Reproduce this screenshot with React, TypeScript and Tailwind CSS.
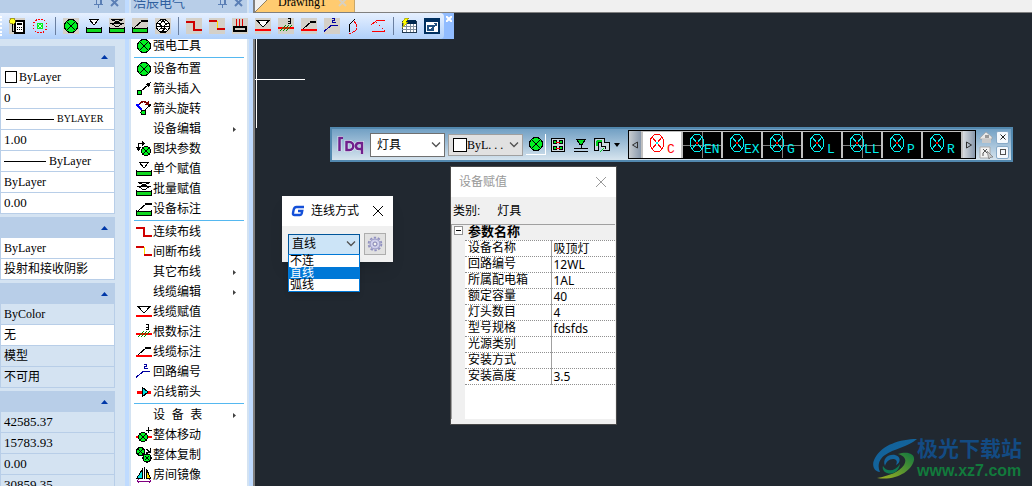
import type { ReactNode } from "react";

function Icon({ children, className = "" }: { children: ReactNode; className?: string }) {
  return (
    <svg viewBox="0 0 16 16" fill="none" shapeRendering="crispEdges" className={`h-4 w-4 shrink-0 ${className}`} aria-hidden="true">
      {children}
    </svg>
  );
}

// Lamp symbol, reused inside several icons
function LampShape({ x = 8, y = 8, r = 6 }: { x?: number; y?: number; r?: number }) {
  const d = r * 0.6;
  return (
    <>
      <circle cx={x} cy={y} r={r} fill="#00f020" stroke="#000" strokeWidth="1.3" />
      <path d={`M${x - d} ${y - d}L${x + d} ${y + d}M${x + d} ${y - d}L${x - d} ${y + d}`} stroke="#000" />
    </>
  );
}

// Green luminaire body under the triangle and leader icons
const greenBase = (
  <>
    <path d="M1 11h14v3H1z" fill="#10d820" />
    <path d="M.5 9v6M15.5 9v6M0 10.5h16M0 14.5h16" stroke="#000" />
  </>
);

const icons = {
  lamp: <LampShape r={6.5} />,
  arrowInsert: (
    <>
      <path d="M4 11L12 4" stroke="#000" />
      <path d="M15 1L9 3l4 4z" fill="#000" />
      <rect x="1.5" y="9.5" width="4" height="4" fill="#00f020" stroke="#000" />
    </>
  ),
  arrowRotate: (
    <>
      <path d="M4 3C5 0 9 0 11 2" stroke="#800000" strokeWidth="1.5" />
      <path d="M8 4h5V0z" fill="#800000" />
      <path d="M6 9L2 5" stroke="#00f" strokeWidth="1.5" />
      <path d="M0 3h4L1 7z" fill="#00f" />
      <path d="M9 9l4-4" stroke="#000" />
      <path d="M15 3l-4 1 3 3z" fill="#000" />
      <circle cx="7.5" cy="11.5" r="2.5" fill="#00f020" stroke="#000" />
    </>
  ),
  blockParam: (
    <>
      <path d="M2.5 9V2.5H7M1 8h3" stroke="#000" />
      <path d="M6 0l3 2.5L6 5zM0 6h5L2.5 10z" fill="#000" />
      <LampShape x={10} y={10} r={4.5} />
    </>
  ),
  single: (
    <>
      <path d="M3.5 1.5h9L8 7z" stroke="#000" fill="#fff" />
      {greenBase}
    </>
  ),
  batch: (
    <>
      <path d="M2 1.5h12L3 6M13 6L2 1.5M1 5.5h14M3 6l5 3 5-3" stroke="#000" />
      {greenBase}
    </>
  ),
  deviceMark: (
    <>
      {greenBase}
      <path d="M2 10l8-7" stroke="#000" />
      <path d="M9 2.5h7" stroke="#000" strokeWidth="2" />
    </>
  ),
  wire: <path d="M0 4h8v8h8" stroke="#d00000" strokeWidth="2" />,
  brokenWire: (
    <>
      <path d="M8.5 3v8" stroke="#ffe000" />
      <path d="M0 3h8M8 11h8" stroke="#d00000" strokeWidth="2" />
    </>
  ),
  cableAssign: (
    <>
      <path d="M2 2.5h12L8 9z" stroke="#000" fill="#fff" />
      <path d="M0 12h16" stroke="#f00" strokeWidth="2" />
    </>
  ),
  rootCount: (
    <>
      <path d="M0 10h16" stroke="#f00" strokeWidth="2" />
      <path d="M2 13l6-6M5 13l6-6M8 13l6-6" stroke="#009000" />
      <path d="M10 .5h2.5v5H10M10 3h3" stroke="#000" />
    </>
  ),
  cableMark: (
    <>
      <path d="M0 12h16" stroke="#f00" strokeWidth="2" />
      <path d="M2 11l8-7" stroke="#000" />
      <path d="M9 4h6" stroke="#000" strokeWidth="2" />
    </>
  ),
  circuitNo: (
    <>
      <path d="M0 13.5l7-6h7" stroke="#0000a0" strokeWidth="1.2" />
      <path d="M8 .5h2.5v2H8.5v2H12" stroke="#0000a0" />
    </>
  ),
  alongArrow: (
    <>
      <path d="M1 8h14" stroke="#f00" strokeWidth="3" />
      <path d="M6 3l6 5-6 5z" fill="#00e0e0" stroke="#000" />
    </>
  ),
  moveAll: (
    <>
      <path d="M0 10h16" stroke="#f00" strokeWidth="2" />
      <LampShape x={7} y={10} r={4.5} />
      <path d="M12.5 0v6M9.5 3h6" stroke="#000" />
    </>
  ),
  copyAll: (
    <>
      <LampShape x={4.5} y={4.5} r={4} />
      <LampShape x={11} y={11} r={4} />
      <path d="M10 2l4 3M14 1v4h-4" stroke="#000" />
    </>
  ),
  mirror: (
    <>
      <path d="M6.5 2v9H1z" fill="#00e0e0" stroke="#000" />
      <path d="M10.5 2v9h4z" fill="#ffe000" stroke="#000" />
      <path d="M8.5 0v12" stroke="#000" />
      <path d="M1 14h14M3 12l-2 2 2 2M13 12l2 2-2 2" stroke="#800080" />
    </>
  ),
  calculator: (
    <>
      <path d="M6 3h9v12H6z" fill="#fff" stroke="#000" strokeWidth="2" />
      <path d="M8 6h5" stroke="#000" strokeWidth="2" />
      <path d="M8 9.5h5M8 11.5h5" stroke="#000" strokeDasharray="1 1" />
      <circle cx="3.5" cy="3" r="3" fill="#ffff20" stroke="#706000" strokeWidth=".6" />
      <path d="M3.5 6v7H6" stroke="#000" />
    </>
  ),
  target: (
    <>
      <circle cx="8" cy="8" r="7" stroke="#f00" strokeDasharray="1.5 1.6" />
      <circle cx="8" cy="8" r="3.5" fill="#00f020" />
      <path d="M6 6l4 4M10 6l-4 4" stroke="#fff" strokeWidth=".8" />
    </>
  ),
  phases: (
    <>
      <circle cx="8" cy="8" r="6.5" stroke="#000" fill="#fff" />
      <path d="M5.5 6L8 2l2.5 4M1 8h14M3 5l4 3M13 5L9 8M4 12l4-4M12 12L8 8M6 10.5h4l-3 3h3" stroke="#000" />
    </>
  ),
  ground: (
    <>
      <path d="M4.5 1v7M7.5 1v7M10.5 1v7" stroke="#e00000" />
      <path d="M2 9h12v4H2z" fill="#d4d0c8" stroke="#000" strokeWidth="1.3" />
    </>
  ),
  polygon: (
    <>
      <path d="M2 14V7l6-6" stroke="#000" />
      <path d="M7 3l3 4-1 5-4 3H2" stroke="#f00" strokeDasharray="3 1" />
    </>
  ),
  angle: (
    <>
      <path d="M15 2.5H7L1 7M2 13.5h13" stroke="#f00" />
      <path d="M6 4l9 9" stroke="#f00" strokeDasharray="2 2" />
    </>
  ),
  grid: (
    <>
      <path d="M1 3h14v11H1z" fill="#fff" stroke="#203850" />
      <path d="M5 2h10v4H5z" fill="#002850" />
      <path d="M1 8.5h14M1 11.5h14M5.5 6v8M9.5 6v8M12.5 6v8" stroke="#8090a0" />
      <path d="M4 0h4L5 4h2l-6 6 2-5H1z" fill="#ffff00" stroke="#605800" strokeWidth=".4" />
    </>
  ),
  popout: (
    <>
      <path d="M1 1h14v14H1z" fill="#fff" stroke="#003060" strokeWidth="2" />
      <path d="M1 1h14v3H1z" fill="#003060" />
      <path d="M4 8h5v4H4zM7 11l5-4" stroke="#205080" strokeWidth="1.5" />
      <path d="M9 5h4v4z" fill="#205080" />
    </>
  ),
};

type IconName = keyof typeof icons;

const toolbar: { icon: IconName | null; name: string; flat?: boolean }[] = [
  { icon: "calculator", name: "计算" },
  { icon: "target", name: "定位", flat: true },
  { icon: null, name: "s1" },
  { icon: "lamp", name: "设备布置" },
  { icon: "single", name: "单个赋值", flat: true },
  { icon: "batch", name: "批量赋值" },
  { icon: "deviceMark", name: "设备标注" },
  { icon: "phases", name: "相序" },
  { icon: null, name: "s2" },
  { icon: "wire", name: "连续布线" },
  { icon: "brokenWire", name: "间断布线" },
  { icon: "ground", name: "接地" },
  { icon: "cableAssign", name: "线缆赋值" },
  { icon: "rootCount", name: "根数标注" },
  { icon: "cableMark", name: "线缆标注" },
  { icon: "circuitNo", name: "回路编号" },
  { icon: "polygon", name: "多边形", flat: true },
  { icon: "angle", name: "角度", flat: true },
  { icon: null, name: "s3" },
  { icon: "grid", name: "表格", flat: true },
  { icon: "popout", name: "窗口", flat: true },
];

type MenuItem = { label: string; icon?: IconName; sub?: boolean };

const menuGroups: MenuItem[][] = [
  [{ label: "强电工具", icon: "lamp" }],
  [
    { label: "设备布置", icon: "lamp" },
    { label: "箭头插入", icon: "arrowInsert" },
    { label: "箭头旋转", icon: "arrowRotate" },
    { label: "设备编辑", sub: true },
    { label: "图块参数", icon: "blockParam" },
    { label: "单个赋值", icon: "single" },
    { label: "批量赋值", icon: "batch" },
    { label: "设备标注", icon: "deviceMark" },
  ],
  [
    { label: "连续布线", icon: "wire" },
    { label: "间断布线", icon: "brokenWire" },
    { label: "其它布线", sub: true },
    { label: "线缆编辑", sub: true },
    { label: "线缆赋值", icon: "cableAssign" },
    { label: "根数标注", icon: "rootCount" },
    { label: "线缆标注", icon: "cableMark" },
    { label: "回路编号", icon: "circuitNo" },
    { label: "沿线箭头", icon: "alongArrow" },
  ],
  [
    { label: "设  备  表", sub: true },
    { label: "整体移动", icon: "moveAll" },
    { label: "整体复制", icon: "copyAll" },
    { label: "房间镜像", icon: "mirror" },
  ],
];

type Prop = { value: string; kind?: "swatch" | "long" | "short"; locked?: boolean };

const sections: Prop[][] = [
  [
    { value: "ByLayer", kind: "swatch" },
    { value: "0" },
    { value: "BYLAYER", kind: "long" },
    { value: "1.00" },
    { value: "ByLayer", kind: "short" },
    { value: "ByLayer" },
    { value: "0.00" },
  ],
  [{ value: "ByLayer" }, { value: "投射和接收阴影" }],
  [
    { value: "ByColor", locked: true },
    { value: "无" },
    { value: "模型", locked: true },
    { value: "不可用", locked: true },
  ],
  [
    { value: "42585.37", locked: true },
    { value: "15783.93", locked: true },
    { value: "0.00", locked: true },
    { value: "30859.35", locked: true },
  ],
];

const params = [
  ["设备名称", "吸顶灯"],
  ["回路编号", "12WL"],
  ["所属配电箱", "1AL"],
  ["额定容量", "40"],
  ["灯头数目", "4"],
  ["型号规格", "fdsfds"],
  ["光源类别", ""],
  ["安装方式", ""],
  ["安装高度", "3.5"],
];

const symbols = [
  { code: "C", active: true },
  { code: "EN", cross: true },
  { code: "EX" },
  { code: "G", cross: true },
  { code: "L" },
  { code: "LL", cross: true },
  { code: "P" },
  { code: "R" },
];

function PanelButtons() {
  return (
    <>
      <button aria-label="固定" className="h-3 w-3">
        <svg viewBox="0 0 12 12" className="h-3 w-3" fill="none" stroke="#5b7fb5" shapeRendering="crispEdges">
          <path d="M3.5 0v4M7 0v4" />
          <path d="M7.5 0v4" strokeWidth="2" />
          <path d="M1 4.5h9M5.5 5v3" />
        </svg>
      </button>
      <button aria-label="关闭" className="h-3 w-3">
        <svg viewBox="0 0 12 12" className="h-3 w-3" fill="none" stroke="#5b7fb5">
          <path d="M2 -1l7 7M9 -1L2 6" strokeWidth="2" />
        </svg>
      </button>
    </>
  );
}

function PropertyPanel() {
  return (
    <aside className="flex w-[125px] shrink-0 flex-col overflow-hidden bg-[#d4e3f2]">
      <div className="h-[46px] shrink-0">
        <div className="flex h-[14px] justify-end gap-1 bg-[#b8cee8] pr-1">
          <PanelButtons />
        </div>
      </div>
      <div className="mr-[10px] flex flex-col gap-[3px] font-['Liberation_Serif','Noto_Sans_CJK_SC',serif] text-[12px]">
        {sections.map((rows, i) => (
          <section key={i}>
            <button aria-label="折叠" className="flex h-[21px] w-full items-center justify-end bg-[#b8cee8] pr-[7px]">
              <svg viewBox="0 0 7 4" className="h-1 w-[7px]">
                <path d="M0 4L3.5 0 7 4z" fill="#0038a8" />
              </svg>
            </button>
            {rows.map((row, j) => (
              <div
                key={j}
                className={`flex h-[21px] items-center whitespace-nowrap border border-t-0 border-[#b8cee8] pl-[3px] leading-5 ${
                  row.locked ? "bg-[#d4e3f2]" : "bg-white"
                }`}
              >
                {row.kind === "swatch" && <span className="mr-[2px] ml-px h-3 w-3 border border-black" />}
                {row.kind === "long" && <span className="mr-[3px] ml-[2px] h-px w-12 bg-black" />}
                {row.kind === "short" && <span className="mr-[3px] h-px w-[42px] bg-black" />}
                <span className={/^[\d.]+$/.test(row.value) ? "text-[13px]" : row.kind === "long" ? "text-[10px]" : ""}>
                  {row.value}
                </span>
              </div>
            ))}
          </section>
        ))}
      </div>
    </aside>
  );
}

function ToolMenu() {
  return (
    <nav className="flex w-[128px] shrink-0 flex-col overflow-hidden border-x-4 border-[#bfdbff] bg-[#d4e3f2] px-[2px]">
      <div className="h-9 shrink-0">
        <div className="flex h-[14px] justify-between bg-[#b8cee8]">
          <h2 className="-mt-[7px] ml-[2px] text-[13px] leading-5 text-[#2f5f9f]">浩辰电气</h2>
          <div className="flex gap-1 pr-[2px]">
            <PanelButtons />
          </div>
        </div>
      </div>
      <div className="flex-1 bg-white">
        {menuGroups.map((group, i) => (
          <div key={i}>
            {i > 0 && <div className="mx-[3px] my-px h-px bg-[#55b8f0]" />}
            {group.map((item) => (
              <button
                key={item.label}
                className="flex h-5 w-full items-center gap-px pr-[11px] pl-[5px] text-[12px] leading-5 whitespace-pre"
              >
                {item.icon ? <Icon>{icons[item.icon]}</Icon> : <span className="w-4" />}
                <span>{item.label}</span>
                {item.sub && (
                  <svg viewBox="0 0 3 5" className="ml-auto h-[5px] w-[3px]">
                    <path d="M0 0l3 2.5L0 5z" fill="#404040" />
                  </svg>
                )}
              </button>
            ))}
          </div>
        ))}
      </div>
    </nav>
  );
}

function FloatingToolbar() {
  return (
    <div role="toolbar" className="absolute top-[13px] left-0 flex h-[26px] bg-[#91bcff]">
      <div className="flex items-center gap-[7px] rounded-r-sm bg-linear-to-b from-[#e6f0ff] to-[#b0d0fa] pr-1">
        <span className="h-5 w-[2px] border-l-2 border-dotted border-white" />
        {toolbar.map((tool) =>
          tool.icon ? (
            <button key={tool.name} aria-label={tool.name} className={tool.flat ? "" : "bg-[#d4d0c8]"}>
              <Icon>{icons[tool.icon]}</Icon>
            </button>
          ) : (
            <span key={tool.name} className="h-[18px] w-px bg-[#6a7fa0]" />
          ),
        )}
      </div>
      <button aria-label="关闭工具栏" className="flex h-3 w-[10px] items-center justify-center">
        <svg viewBox="0 0 6 6" className="h-[6px] w-[6px]" stroke="#fff" strokeWidth="2">
          <path d="M0 0l6 6M6 0L0 6" />
        </svg>
      </button>
    </div>
  );
}

function Chevron({ className = "" }: { className?: string }) {
  return (
    <svg viewBox="0 0 10 6" fill="none" stroke="#505050" strokeWidth="1.3" className={`pointer-events-none absolute h-[6px] w-[10px] ${className}`}>
      <path d="M1 .5l4 4 4-4" />
    </svg>
  );
}

function LampSymbol({ code, active, cross }: { code: string; active?: boolean; cross?: boolean }) {
  const line = active ? "#f00" : "#00f0f0";
  return (
    <button aria-label={code} className={`h-[26px] w-[38px] ${active ? "bg-white" : "bg-black"}`}>
      <svg viewBox="0 0 38 26" className="h-[26px] w-[38px]" fill="none" shapeRendering="crispEdges">
        {cross && <path d="M19.5 0v26M0 13.5h38" stroke="#808080" />}
        <ellipse cx="14" cy="11" rx="7" ry="9" stroke={line} />
        <path d="M9 5l10 12M19 5L9 17" stroke={line} />
        <path d="M13 10h2v2h-2z" fill={active ? "#00f0f0" : "#f00"} />
        <text
          x={code.length > 1 ? 21 : 24}
          y="21"
          fill={line}
          className="font-['Liberation_Mono',monospace] text-[13px]"
        >
          {code}
        </text>
      </svg>
    </button>
  );
}

function SymbolBar() {
  return (
    <div className="absolute top-[127px] left-[330px] flex h-[35px] items-center border-2 border-[#5288ae] bg-linear-to-b from-[#72a0c4] to-[#d6e4ee]">
      <svg viewBox="0 0 28 20" className="ml-[5px] h-5 w-7" fill="none" aria-label="Dq">
        <g stroke="#fff" strokeWidth="4" opacity=".6">
          <path d="M2.5 16V3H6M9.5 7v8h3c5 0 5-8 0-8zM25 19V8h-3c-4 0-4 6 0 6h3" />
        </g>
        <g stroke="#70208c" strokeWidth="2.5">
          <path d="M2.5 16V3H6M9.5 7v8h3c5 0 5-8 0-8zM25 19V8h-3c-4 0-4 6 0 6h3" />
        </g>
      </svg>
      <label className="relative ml-[5px] flex items-center">
        <select aria-label="类别" className="h-6 w-[75px] appearance-none border border-[#707070] bg-white pl-[6px] text-[12px]">
          <option>灯具</option>
        </select>
        <Chevron className="right-1" />
      </label>
      <label className="relative ml-[3px] flex items-center">
        <select
          aria-label="图层颜色"
          className="h-[22px] w-[75px] appearance-none border border-[#a0a0a0] bg-[#e1e1e1] pl-[18px] font-['Liberation_Serif',serif] text-[12px]"
        >
          <option>ByL. . .</option>
        </select>
        <span className="pointer-events-none absolute left-[5px] h-[14px] w-[14px] border border-black bg-white" />
        <Chevron className="right-1" />
      </label>
      <button aria-label="布置" className="ml-[3px] flex h-[21px] w-5 items-center justify-center border-r border-b border-white">
        <Icon>{icons.lamp}</Icon>
      </button>
      <button aria-label="矩形布置" className="ml-1">
        <Icon>
          <path d="M1.5 1.5h13v13h-13z" stroke="#000" strokeWidth="1.3" fill="#ccd8e0" />
          <path d="M3 3h4v4H3zM9 3h4v4H9zM3 9h4v4H3zM9 9h4v4H9z" fill="#000" />
          <path d="M4 4h2v2H4zM10 4h2v2h-2zM4 10h2v2H4zM10 10h2v2h-2z" fill="#00e020" />
          <path d="M6 5h4M6 11h4" stroke="#f00" />
        </Icon>
      </button>
      <button aria-label="穿墙" className="ml-[7px]">
        <Icon>
          <path d="M3.5 2.5h9L9 7.5H7z" fill="#00e020" stroke="#000" />
          <path d="M8 7v4M1 11.5h14M1 14.5h14" stroke="#000" />
        </Icon>
      </button>
      <button aria-label="沿线布置" className="ml-[5px]">
        <Icon>
          <path d="M.5 1.5h10v4h5v8H9M.5 1v12h4V5h3v4h4v3" fill="#ccd8e0" stroke="#000" />
          <path d="M3 3.5h5M2.5 4v5" stroke="#00d020" strokeWidth="2" />
          <path d="M6 15l4-4" stroke="#00d020" />
        </Icon>
      </button>
      <button aria-label="更多" className="ml-1 w-2">
        <svg viewBox="0 0 6 4" className="h-1 w-[6px]">
          <path d="M0 0h6L3 4z" />
        </svg>
      </button>
      <div className="ml-[6px] flex h-[29px] border border-black bg-[#c0c0c0]">
        <button aria-label="上一组" className="flex w-3 items-center justify-center bg-linear-to-r from-[#c8ccd0] to-[#8898ac]">
          <svg viewBox="0 0 6 8" className="h-2 w-[6px]" fill="none" stroke="#303030">
            <path d="M5.5 1v6L.5 4z" />
          </svg>
        </button>
        <div className="flex items-center gap-[2px] px-[2px]">
          {symbols.map((symbol) => (
            <LampSymbol key={symbol.code} {...symbol} />
          ))}
        </div>
        <button aria-label="下一组" className="flex w-3 items-center justify-center bg-linear-to-r from-[#d8dce0] to-[#8898ac]">
          <svg viewBox="0 0 6 8" className="h-2 w-[6px]" fill="none" stroke="#303030">
            <path d="M.5 1v6l5-3z" />
          </svg>
        </button>
      </div>
      <div className="mr-px ml-[3px] grid grid-cols-2 gap-x-[3px] gap-y-[2px]">
        <button aria-label="主页">
          <svg viewBox="0 0 14 13" className="h-[13px] w-[14px]">
            <path d="M1 7l6-6 6 5v2H1z" fill="#e8e8e8" stroke="#999" strokeWidth=".6" />
            <path d="M3 8h9v4H3z" fill="#c8c8c8" />
            <path d="M6 4h4v3H6z" fill="#999" />
          </svg>
        </button>
        <button aria-label="关闭" className="flex h-[13px] w-[13px] items-center justify-center rounded-[2px] border border-[#87a9c7] bg-[#f4f8fc]">
          <svg viewBox="0 0 6 6" className="h-[6px] w-[6px]" stroke="#202020">
            <path d="M.5.5l5 5M5.5.5l-5 5" />
          </svg>
        </button>
        <button aria-label="选取">
          <svg viewBox="0 0 14 13" className="h-[13px] w-[14px]" fill="none">
            <path d="M1 1h10v11H1z" fill="#f2f2f2" stroke="#aaa" />
            <path d="M4 3l4 4M8 3L4 7v3" stroke="#555" />
            <path d="M8 5l6 6-3 .5-1 2z" fill="#ccc" stroke="#666" strokeWidth=".6" />
          </svg>
        </button>
        <button aria-label="最大化" className="flex h-[13px] w-[13px] items-center justify-center rounded-[2px] border border-[#87a9c7] bg-[#f4f8fc]">
          <span className="h-[6px] w-[6px] border border-[#505050]" />
        </button>
      </div>
    </div>
  );
}

function CloseMark() {
  return (
    <svg viewBox="0 0 12 12" fill="none" className="h-3 w-3">
      <path d="M1 1l10 10M11 1L1 11" stroke="currentColor" />
    </svg>
  );
}

function WireDialog() {
  return (
    <div role="dialog" aria-label="连线方式" className="absolute top-[196px] left-[282px] w-[111px] bg-[#f0f0f0] text-[12px] shadow-lg">
      <header className="flex h-[30px] items-center bg-white px-[9px]">
        <svg viewBox="0 0 14 12" className="h-3 w-[14px]" fill="none">
          <path d="M13 2H5.500C3.500 2 3 3 2.600 5L2 8c-.3 1.500.2 2 1.500 2h5.500c1 0 1.500-.5 1.700-1.500L11.200 6H7" stroke="#1450d8" strokeWidth="2.4" />
        </svg>
        <h2 className="ml-[6px]">连线方式</h2>
        <button aria-label="关闭" className="ml-auto">
          <CloseMark />
        </button>
      </header>
      <div className="flex h-9 items-center gap-1 px-[6px]">
        <label className="relative flex items-center">
          <select aria-label="连线方式" defaultValue="直线" className="h-[21px] w-[72px] appearance-none border border-[#005499] bg-[#cce4f7] pl-[3px] text-[12px]">
            <option>不连</option>
            <option>直线</option>
            <option>弧线</option>
          </select>
          <Chevron className="right-1" />
        </label>
        <button aria-label="设置" className="flex h-[22px] w-[22px] items-center justify-center border border-[#adadad] bg-[#e1e1e1]">
          <svg viewBox="0 0 16 16" className="h-4 w-4" fill="none">
            <circle cx="8" cy="8" r="6.4" stroke="#9090c0" strokeWidth="1.8" strokeDasharray="2.400 1.620" />
            <circle cx="8" cy="8" r="5" fill="#d0d0ec" stroke="#9494c4" />
            <circle cx="8" cy="8" r="2" fill="#f0f0f0" stroke="#8080b0" />
          </svg>
        </button>
      </div>
      <ul role="listbox" aria-label="连线方式选项" className="absolute top-[58px] left-[6px] w-[72px] border border-[#0078d7] bg-white leading-3 shadow-md">
        <li role="option" aria-selected="false" className="h-3 pl-px">不连</li>
        <li role="option" aria-selected="true" className="h-3 bg-[#0078d7] pl-px text-white">直线</li>
        <li role="option" aria-selected="false" className="h-3 pl-px">弧线</li>
      </ul>
    </div>
  );
}

function AssignDialog() {
  return (
    <div role="dialog" aria-label="设备赋值" className="absolute top-[166px] left-[450px] w-[167px] border border-[#484848] bg-[#f0f0f0] text-[12px]">
      <header className="flex h-[30px] items-center justify-between bg-white pr-[9px] pl-2 text-[#999]">
        <h2>设备赋值</h2>
        <button aria-label="关闭">
          <CloseMark />
        </button>
      </header>
      <p className="flex h-[27px] items-center gap-[17px] pl-[2px]">
        <span>类别:</span>
        <span>灯具</span>
      </p>
      <div className="mr-px mb-[5px] flex h-[195px] border-t border-l border-[#a0a0a0]">
        <div className="w-[13px] shrink-0">
          <button aria-label="折叠" className="mt-px ml-[2px] flex h-[9px] w-[9px] items-center justify-center border border-[#909090] bg-white">
            <span className="h-px w-[5px] bg-black" />
          </button>
        </div>
        <div className="flex-1 bg-white">
          <table className="w-full table-fixed border-collapse leading-[15px]">
            <colgroup>
              <col className="w-[86px]" />
              <col />
            </colgroup>
            <thead>
              <tr className="h-[15px] border-b border-dotted border-[#909090] bg-[#f0f0f0]">
                <th colSpan={2} className="p-0 pl-[3px] text-left text-[13px] leading-[14px] font-bold">
                  参数名称
                </th>
              </tr>
            </thead>
            <tbody>
              {params.map(([name, value]) => (
                <tr key={name} className="h-4 border-b border-dotted border-[#909090]">
                  <td className="p-0 pl-[3px]">{name}</td>
                  <td className="border-l border-solid border-l-[#a0a0a0] p-0 pl-[2px] font-['Noto_Sans','Noto_Sans_CJK_SC',sans-serif]">
                    {value}
                  </td>
                </tr>
              ))}
            </tbody>
          </table>
        </div>
      </div>
    </div>
  );
}

function Watermark() {
  return (
    <div className="absolute right-[10px] bottom-[5px] flex items-center">
      <svg viewBox="0 0 44 42" className="h-[42px] w-11">
        <defs>
          <linearGradient id="swirl" x1="0" y1="0" x2="1" y2="1">
            <stop offset="0" stopColor="#126098" />
            <stop offset="1" stopColor="#1468a0" />
          </linearGradient>
          <linearGradient id="leaf" x1="1" y1="0" x2="0" y2="1">
            <stop offset="0" stopColor="#107840" />
            <stop offset="1" stopColor="#a0b020" />
          </linearGradient>
        </defs>
        <path d="M44 1C27 1 9 7 2 20c-4 7-1 14 5 14-3-6-1-13 5-17C20 11 35 9 44 1z" fill="url(#swirl)" />
        <path d="M12 28c-3-7 3-12 10-11 6 1 6 8 1 10 2-4 0-6-3-6-4 0-7 3-8 7z" fill="url(#swirl)" />
        <path d="M25 16c10-3 17 0 16 6C39 33 23 43 4 40c12-2 22-6 27-13 3-5 1-9-6-11z" fill="url(#leaf)" />
        <path d="M10 28c3 6 12 6 17-2-1 8-8 11-13 9-3-1-5-4-4-7z" fill="#107850" />
      </svg>
      <div>
        <p className="text-[21px] leading-6 font-bold text-[#134b83]">极光下载站</p>
        <p className="font-['Liberation_Sans',sans-serif] text-[16px] leading-5 font-bold text-[#127a3c]">www.xz7.com</p>
      </div>
    </div>
  );
}

function DrawingArea() {
  return (
    <main className="flex min-w-0 flex-1 flex-col border-l-2 border-[#808080]">
      <div className="flex h-[13px] shrink-0 border-b border-[#808080] bg-[#f0f0f0]">
        <div className="relative h-3 w-[100px] overflow-hidden">
          <svg viewBox="0 0 100 12" className="absolute h-3 w-[100px]">
            <path d="M0 12L12 0h88v12z" fill="#ffcb70" />
            <path d="M0 12L12 0M100 0v12" stroke="#908060" />
            <path d="M84 -1l7 7M91 -1l-7 7" stroke="#d8d0c0" strokeWidth="2" />
          </svg>
          <a href="#drawing1" className="relative -mt-[6px] ml-[23px] block font-['Liberation_Serif',serif] text-[12px] leading-4">
            Drawing1
          </a>
        </div>
      </div>
      <div className="flex-1 bg-[#212830]">
        <svg viewBox="0 0 50 115" className="h-[115px] w-[50px]" shapeRendering="crispEdges">
          <path d="M1.5 0v115M0 66.5h50" stroke="#fff" />
        </svg>
      </div>
    </main>
  );
}

export default function App() {
  return (
    <div className="relative flex h-screen overflow-hidden bg-[#212830] font-['Liberation_Sans','Noto_Sans_CJK_SC',sans-serif] text-black">
      <PropertyPanel />
      <ToolMenu />
      <DrawingArea />
      <FloatingToolbar />
      <SymbolBar />
      <AssignDialog />
      <WireDialog />
      <Watermark />
    </div>
  );
}
